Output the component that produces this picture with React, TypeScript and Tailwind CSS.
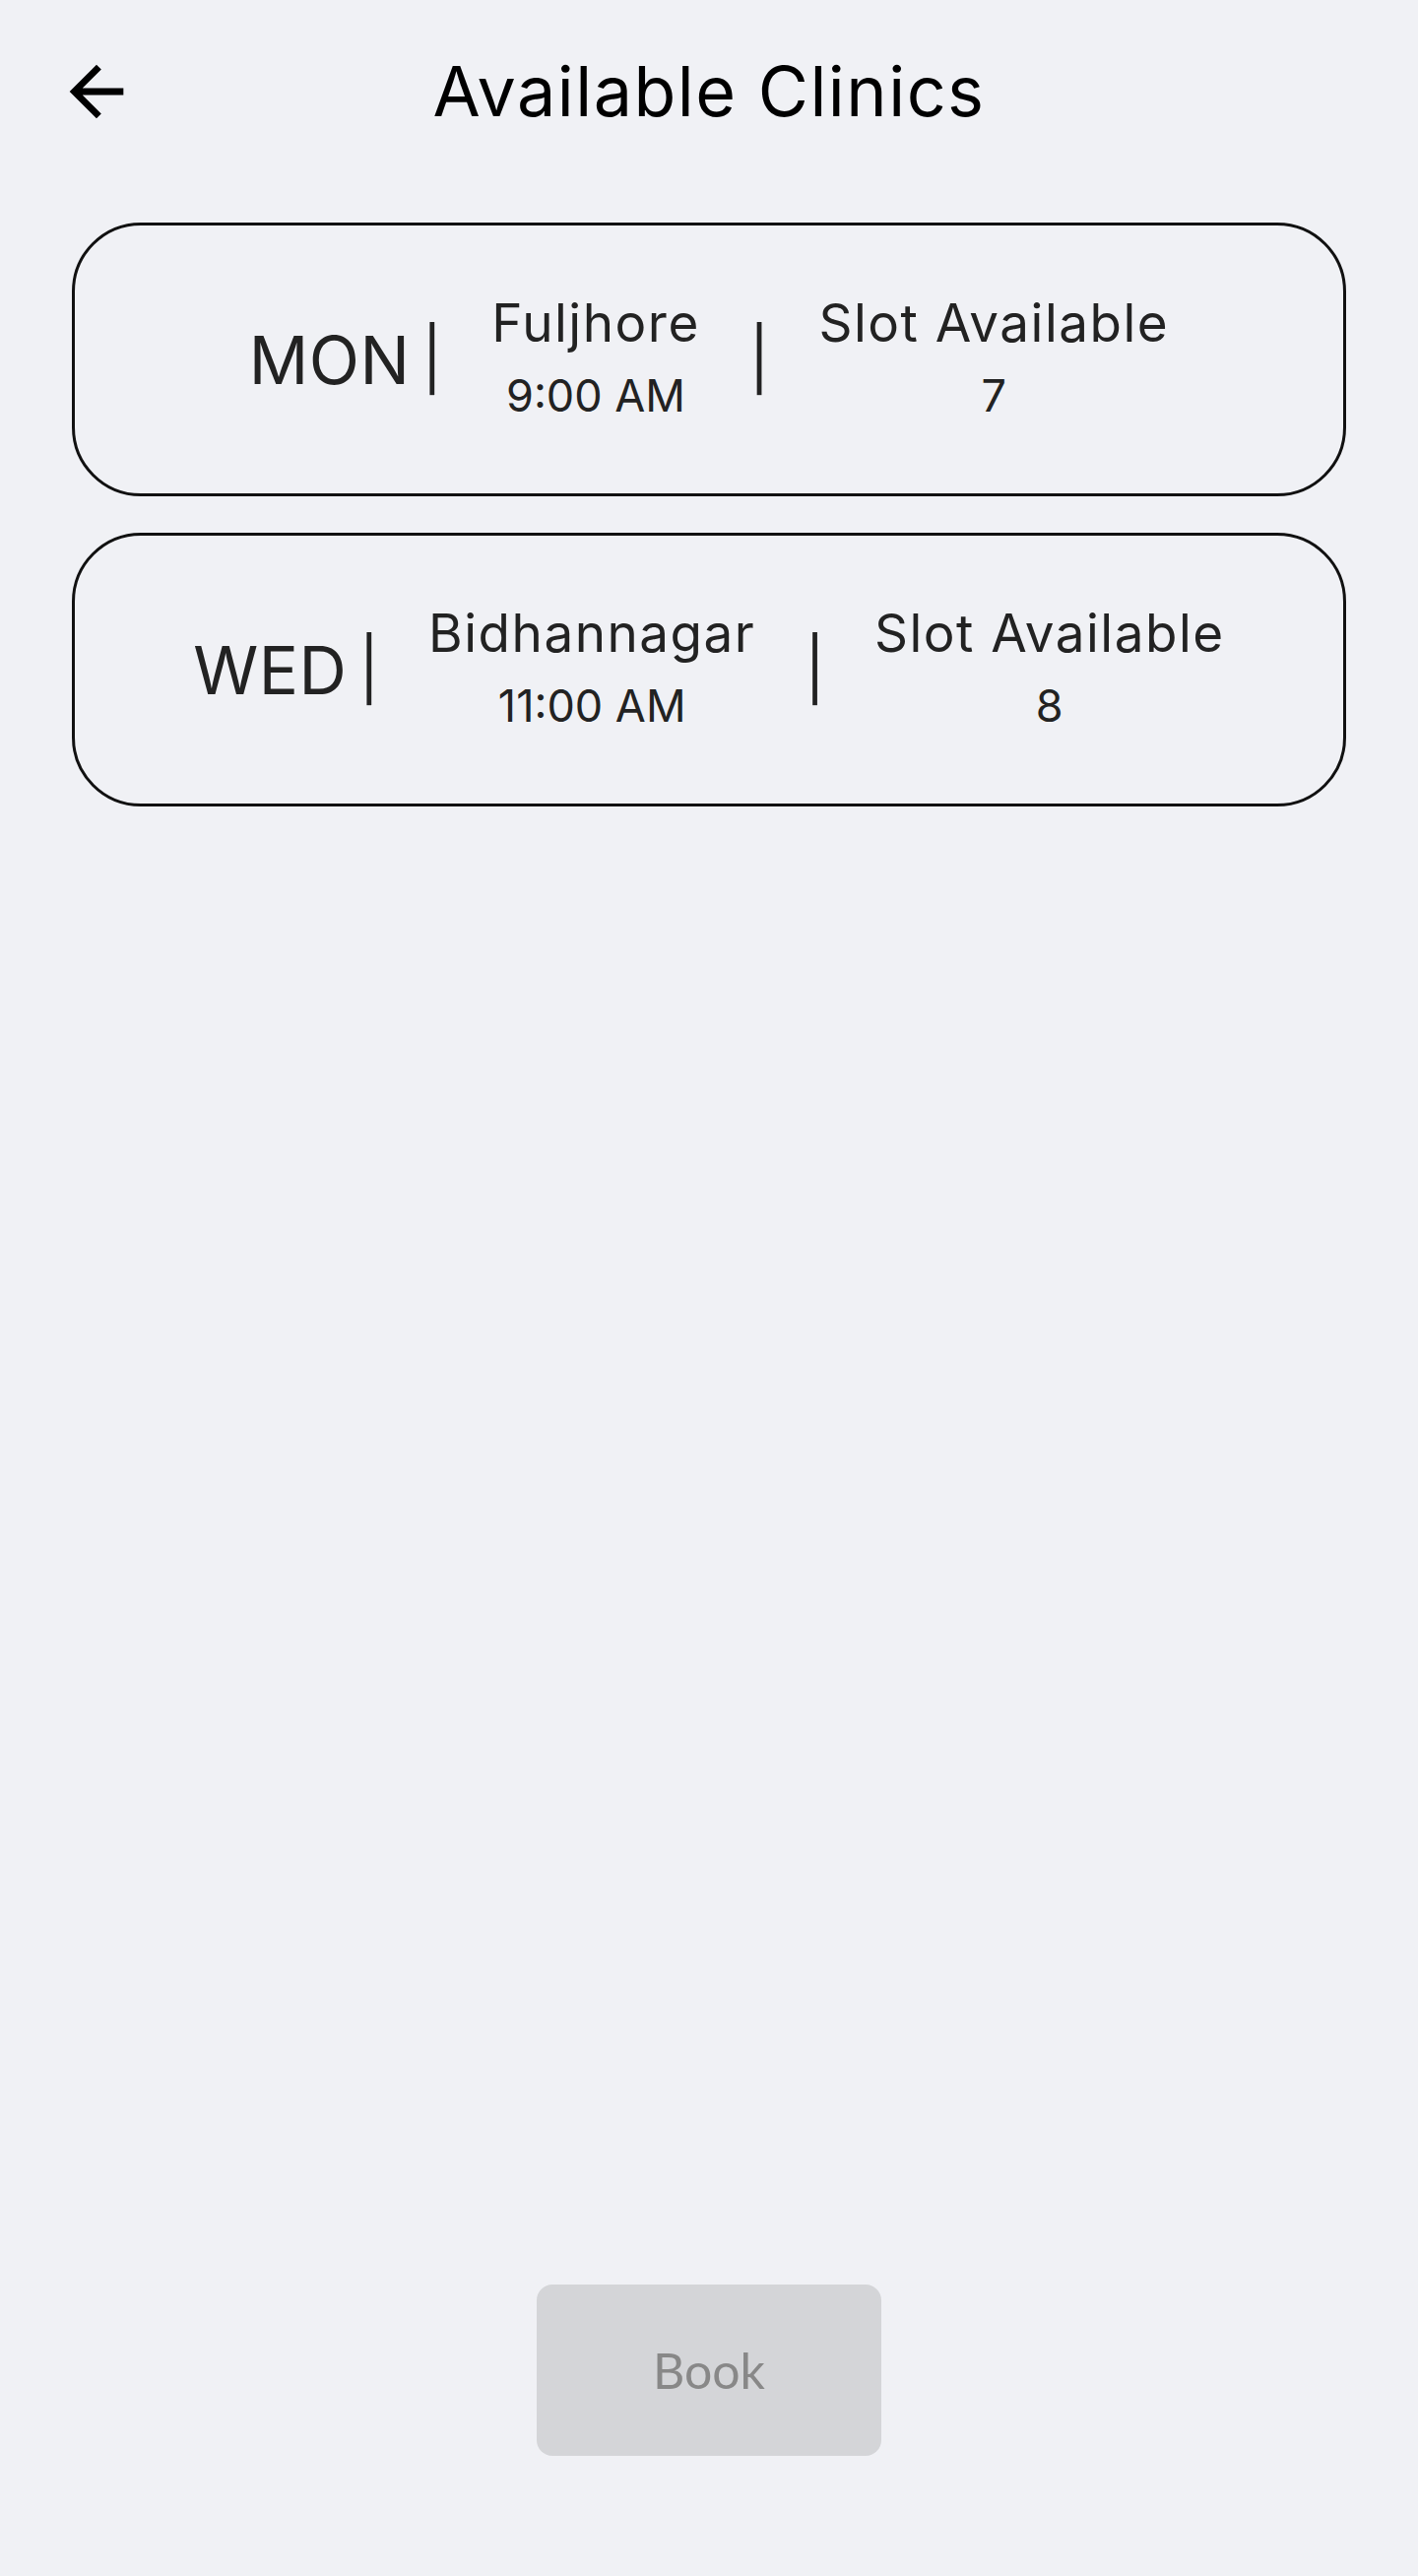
import React from "react";

const clinics = [
  { day: "MON", place: "Fuljhore", time: "9:00 AM", slots: "7" },
  { day: "WED", place: "Bidhannagar", time: "11:00 AM", slots: "8" },
];

function BackArrow() {
  return (
    <svg width="82" height="82" viewBox="0 0 24 24" fill="#000" aria-hidden="true">
      <path d="M20 11H7.83l5.59-5.59L12 4l-8 8 8 8 1.41-1.41L7.83 13H20v-2z" />
    </svg>
  );
}

export default function App() {
  return (
    <div
      className="min-h-[2616px] bg-[#f0f1f5] flex flex-col"
      style={{ fontFamily: "Inter, 'Open Sans', sans-serif" }}
    >
      <header className="h-[186px] grid grid-cols-[1fr_auto_1fr] items-center">
        <div className="pl-[57px] flex items-center">
          <button className="w-[82px] h-[82px] flex items-center justify-center">
            <BackArrow />
          </button>
        </div>
        <h1 className="text-[70px] leading-none text-black font-normal tracking-[1.5px]">
          Available Clinics
        </h1>
        <div />
      </header>

      <main className="px-[73px] pt-[40px] flex flex-col gap-[37px]">
        {clinics.map((c) => (
          <div
            key={c.day}
            className="h-[278px] rounded-[70px] border-[3px] border-[#111] flex items-center justify-center gap-[50px] text-[#222]"
          >
            <div className="flex items-center gap-[12px]">
              <span className="text-[67px] leading-none tracking-[0.5px]">{c.day}</span>
              <span className="text-[62px] leading-none">|</span>
            </div>
            <div className="flex flex-col items-center">
              <span className="text-[53px] leading-[74px] tracking-[1.5px]">{c.place}</span>
              <span className="text-[45px] leading-[74px]">{c.time}</span>
            </div>
            <span className="text-[62px] leading-none">|</span>
            <div className="flex flex-col items-center">
              <span className="text-[53px] leading-[74px] tracking-[1.5px]">Slot Available</span>
              <span className="text-[45px] leading-[74px]">{c.slots}</span>
            </div>
          </div>
        ))}
      </main>

      <div className="flex-1" />

      <div className="flex justify-center pb-[122px]">
        <button
          className="w-[350px] h-[174px] rounded-[16px] bg-[#d4d5d8] text-[#888888] text-[50px]"
          style={{ fontFamily: "Lato, sans-serif" }}
        >
          Book
        </button>
      </div>
    </div>
  );
}
